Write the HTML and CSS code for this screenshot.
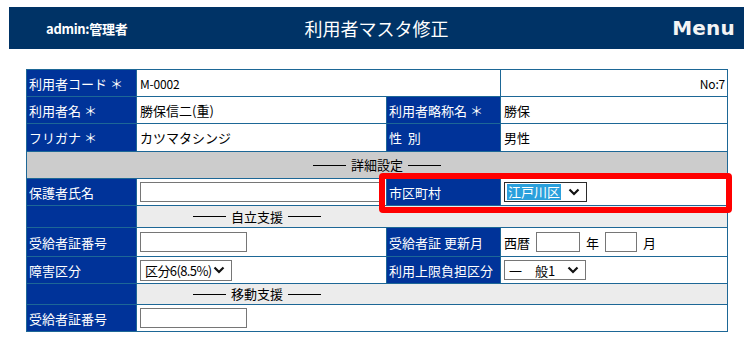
FILE: index.html
```html
<!DOCTYPE html>
<html lang="ja">
<head>
<meta charset="utf-8">
<title>利用者マスタ修正</title>
<link rel="stylesheet" href="styles.css">
</head>
<body>
<header class="topbar">
  <div class="user">admin:管理者</div>
  <h1 class="title">利用者マスタ修正</h1>
  <div class="menu">Menu</div>
</header>
<div class="form-wrap">
  <table class="form">
    <colgroup>
      <col class="c1"><col class="c2"><col class="c3"><col class="c4">
    </colgroup>
    <tr class="h27">
      <th>利用者コード ＊</th>
      <td colspan="2" class="small">M-0002</td>
      <td class="small right">No:7</td>
    </tr>
    <tr class="h27">
      <th>利用者名 ＊</th>
      <td>勝保信二(重)</td>
      <th>利用者略称名 ＊</th>
      <td>勝保</td>
    </tr>
    <tr class="h28">
      <th>フリガナ ＊</th>
      <td>カツマタシンジ</td>
      <th>性&nbsp;&nbsp;別</th>
      <td>男性</td>
    </tr>
    <tr class="h27">
      <td colspan="4" class="section"><div class="ruled">詳細設定</div></td>
    </tr>
    <tr class="h27">
      <th>保護者氏名</th>
      <td><input class="txt wide" type="text"></td>
      <th>市区町村</th>
      <td>
        <div class="sel focus">
          <span class="hl">江戸川区</span>
          <svg class="chev" width="12" height="8" viewBox="0 0 12 8"><path d="M1.5 1.5 L6 6 L10.5 1.5" fill="none" stroke="#111" stroke-width="2.2"/></svg>
        </div>
      </td>
    </tr>
    <tr class="h22">
      <th></th>
      <td colspan="3" class="sub"><div class="ruled narrow">自立支援</div></td>
    </tr>
    <tr class="h29">
      <th>受給者証番号</th>
      <td><input class="txt short" type="text"></td>
      <th>受給者証 更新月</th>
      <td>
        <div class="ym">
          <span>西暦</span><input class="txt yr" type="text"><span>年</span><input class="txt mo" type="text"><span>月</span>
        </div>
      </td>
    </tr>
    <tr class="h27">
      <th>障害区分</th>
      <td>
        <div class="sel s93">
          <span class="opt tight">区分6(8.5%)</span>
          <svg class="chev" width="12" height="8" viewBox="0 0 12 8"><path d="M1.5 1.5 L6 6 L10.5 1.5" fill="none" stroke="#111" stroke-width="2.2"/></svg>
        </div>
      </td>
      <th>利用上限負担区分</th>
      <td>
        <div class="sel s82">
          <span class="opt">一　般1</span>
          <svg class="chev" width="12" height="8" viewBox="0 0 12 8"><path d="M1.5 1.5 L6 6 L10.5 1.5" fill="none" stroke="#111" stroke-width="2.2"/></svg>
        </div>
      </td>
    </tr>
    <tr class="h21">
      <th></th>
      <td colspan="3" class="sub"><div class="ruled narrow">移動支援</div></td>
    </tr>
    <tr class="h27">
      <th>受給者証番号</th>
      <td colspan="3"><input class="txt short" type="text"></td>
    </tr>
  </table>
  <div class="highlight-box"></div>
</div>
</body>
</html>
```
FILE: styles.css
```css
* { box-sizing: border-box; }
html, body { margin: 0; padding: 0; background: #ffffff; }
body {
  font-family: "Noto Sans CJK JP", "Noto Sans", sans-serif;
  font-size: 13px;
  color: #000;
  padding: 7px 9px 0 9px;
}
.topbar {
  width: 735px;
  height: 42px;
  background: #003366;
  color: #fff;
  display: grid;
  grid-template-columns: 1fr auto 1fr;
  align-items: center;
}
.user {
  padding-left: 37px;
  font-size: 13px;
  font-weight: bold;
  letter-spacing: -0.3px;
}
.title {
  margin: 0;
  font-size: 18px;
  font-weight: normal;
}
.menu {
  justify-self: end;
  padding-right: 9px;
  font-family: "DejaVu Sans", sans-serif;
  font-weight: bold;
  font-size: 20px;
  letter-spacing: 0.2px;
  color: #f4f4f4;
}
.form-wrap {
  position: relative;
  margin: 20px 0 0 17px;
  width: 701px;
}
.form {
  width: 701px;
  table-layout: fixed;
  border-collapse: separate;
  border-spacing: 0;
  border-top: 1px solid #1d6796;
  border-left: 1px solid #1d6796;
}
.c1 { width: 110px; }
.c2 { width: 250px; }
.c3 { width: 114px; }
.c4 { width: 227px; }
.form th, .form td {
  border-right: 1px solid #1d6796;
  border-bottom: 1px solid #1d6796;
  padding: 0 3px;
  text-align: left;
  vertical-align: middle;
  font-weight: normal;
  white-space: nowrap;
  overflow: hidden;
}
.form th {
  background: #003399;
  color: #fff;
  padding-left: 2px;
}
.h27 { height: 27px; }
.h28 { height: 28px; }
.h22 { height: 22px; }
.h29 { height: 29px; }
.h21 { height: 21px; }
.small { font-size: 12px; letter-spacing: -0.2px; }
.right { text-align: right !important; padding-right: 2px !important; }
.section {
  background: #cccccc;
}
.ruled {
  display: flex;
  justify-content: center;
  align-items: center;
  gap: 5px;
  line-height: 18px;
}
.ruled::before,
.ruled::after {
  content: "";
  display: block;
  width: 33px;
  height: 1px;
  background: #000;
}
.narrow { width: 240px; }
.sub {
  background: #ececec;
  padding: 0 !important;
}
.txt {
  display: block;
  height: 20px;
  border: 1px solid #767676;
  background: #fff;
  padding: 0;
  margin: 0;
  font: inherit;
}
.wide { width: 244px; }
.short { width: 107px; }
.yr { width: 44px; }
.mo { width: 32px; }
.ym {
  display: flex;
  align-items: center;
  gap: 4px;
}
.ym .txt { margin: 0 2px; }
.sel {
  display: flex;
  align-items: center;
  justify-content: space-between;
  height: 21px;
  border: 1px solid #767676;
  background: #fff;
  padding: 0 6px 0 1px;
}
.sel.focus {
  width: 83px;
  height: 20px;
  border-color: #2b2b2b;
  padding-left: 2px;
  padding-right: 6px;
}
.s93 { width: 92px; }
.s82 { width: 82px; height: 20px; }
.hl {
  background: #2aa0dc;
  color: #fff;
  padding: 0 1px;
  line-height: 16px;
}
.opt { padding-left: 3px; }
.tight { letter-spacing: -0.6px; }
.chev { display: block; flex: none; }
.highlight-box {
  position: absolute;
  left: 353px;
  top: 104px;
  width: 353px;
  height: 40px;
  border: 6px solid #ff0000;
  border-radius: 4px;
}
```
